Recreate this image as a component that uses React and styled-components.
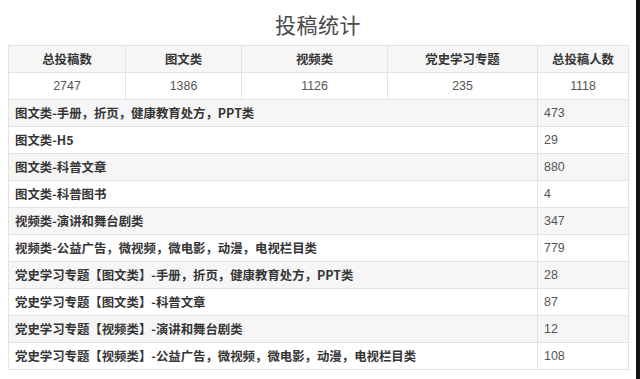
import React from 'react';
import styled, { createGlobalStyle } from 'styled-components';

const GlobalStyle = createGlobalStyle`
  html, body {
    margin: 0;
    padding: 0;
    background: #fff;
  }
  body {
    font-family: "Liberation Sans", "Noto Sans CJK SC", sans-serif;
  }
`;

const Page = styled.div`
  width: 640px;
  height: 379px;
  box-sizing: border-box;
  padding-left: 8px;
  border-right: 4px solid #141414;
  overflow: hidden;
`;

const Title = styled.h1`
  width: 620px;
  height: 45px;
  margin: 0;
  display: flex;
  align-items: center;
  justify-content: center;
  padding-top: 2px;
  box-sizing: border-box;
  font-family: "Noto Sans CJK SC", sans-serif;
  font-size: 21px;
  font-weight: 400;
  color: #4a4a4a;
  letter-spacing: 0.5px;
`;

const Table = styled.table`
  width: 620px;
  table-layout: fixed;
  border-collapse: collapse;
  border: 1px solid #e3e3e3;
  font-size: 12.4px;

  tr:nth-child(odd) {
    background: #f6f6f6;
  }
`;

const Col = styled.col`
  width: ${(p) => p.$w}px;
`;

const Cell = styled.td`
  height: 26px;
  padding: 0 6px;
  border: 1px solid #e3e3e3;
  text-align: ${(p) => (p.$center ? 'center' : 'left')};
  font-weight: ${(p) => (p.$bold ? 700 : 400)};
  color: ${(p) => (p.$bold ? '#353535' : '#555')};
  font-family: ${(p) =>
    p.$bold ? '"Noto Sans CJK SC", sans-serif' : '"Liberation Sans", "Noto Sans CJK SC", sans-serif'};
  white-space: nowrap;
  vertical-align: middle;
`;

const columns = [117, 116, 146, 150, 91];
const headers = ['总投稿数', '图文类', '视频类', '党史学习专题', '总投稿人数'];
const totals = ['2747', '1386', '1126', '235', '1118'];

const details = [
  ['图文类-手册，折页，健康教育处方，PPT类', '473'],
  ['图文类-H5', '29'],
  ['图文类-科普文章', '880'],
  ['图文类-科普图书', '4'],
  ['视频类-演讲和舞台剧类', '347'],
  ['视频类-公益广告，微视频，微电影，动漫，电视栏目类', '779'],
  ['党史学习专题【图文类】-手册，折页，健康教育处方，PPT类', '28'],
  ['党史学习专题【图文类】-科普文章', '87'],
  ['党史学习专题【视频类】-演讲和舞台剧类', '12'],
  ['党史学习专题【视频类】-公益广告，微视频，微电影，动漫，电视栏目类', '108'],
];

function App() {
  return (
    <>
      <GlobalStyle />
      <Page>
        <Title>投稿统计</Title>
        <Table>
          <colgroup>
            {columns.map((w, i) => (
              <Col key={i} $w={w} />
            ))}
          </colgroup>
          <tbody>
            <tr>
              {headers.map((h) => (
                <Cell key={h} $center $bold>
                  {h}
                </Cell>
              ))}
            </tr>
            <tr>
              {totals.map((t, i) => (
                <Cell key={i} $center>
                  {t}
                </Cell>
              ))}
            </tr>
            {details.map(([label, value]) => (
              <tr key={label}>
                <Cell colSpan={4} $bold>
                  {label}
                </Cell>
                <Cell>{value}</Cell>
              </tr>
            ))}
          </tbody>
        </Table>
      </Page>
    </>
  );
}

export default App;
